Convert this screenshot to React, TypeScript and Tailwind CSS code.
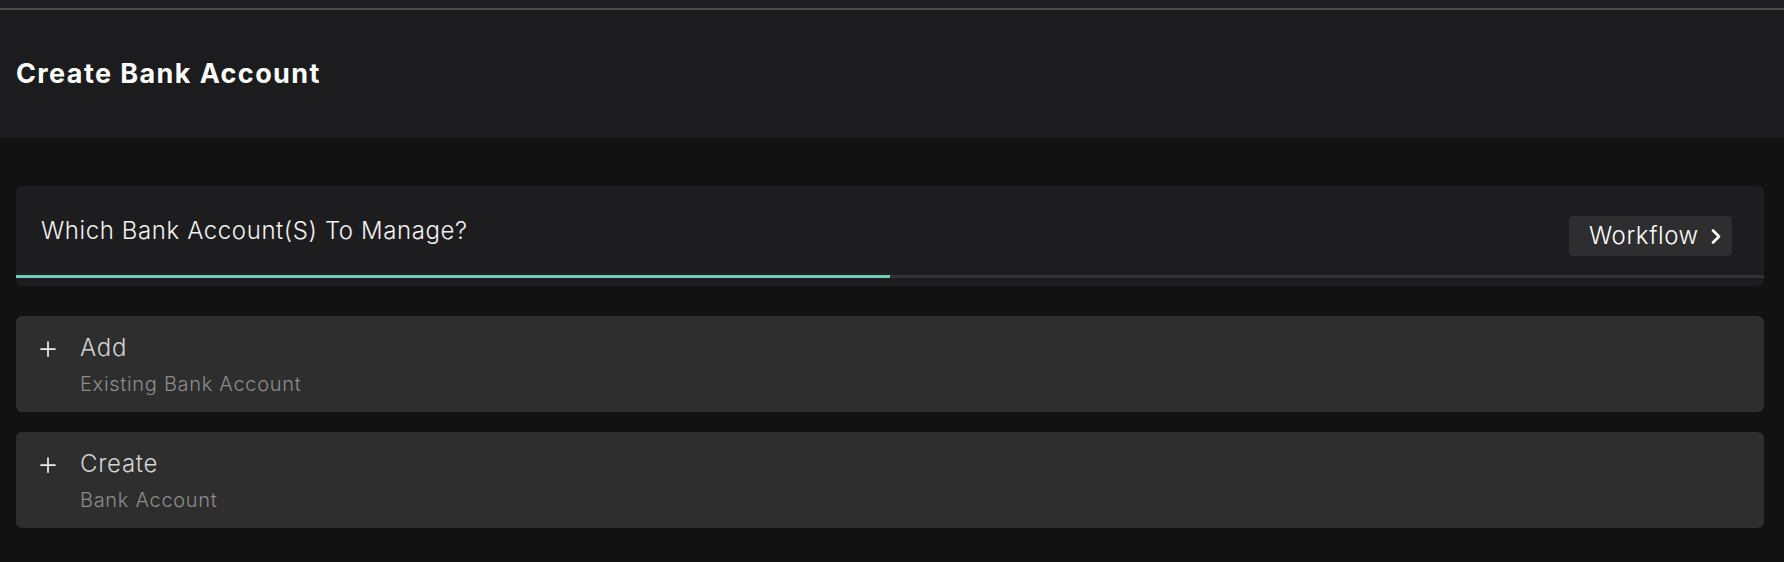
const options = [
  { id: 'add', title: 'Add', subtitle: 'Existing Bank Account' },
  { id: 'create', title: 'Create', subtitle: 'Bank Account' },
];

function PlusIcon() {
  return (
    <svg width="16" height="16" viewBox="0 0 16 16" className="shrink-0 text-[#ececec]">
      <path d="M8 1v14M1 8h14" stroke="currentColor" strokeWidth="1.75" strokeLinecap="round" />
    </svg>
  );
}

function Chevron() {
  return (
    <svg width="10" height="15" viewBox="0 0 10 15" className="shrink-0">
      <path d="M2 1.5l6 6-6 6" fill="none" stroke="white" strokeWidth="2.6" strokeLinecap="round" strokeLinejoin="round" />
    </svg>
  );
}

export default function App() {
  const progress = 50;

  return (
    <div className="min-h-screen bg-[#121212] font-['Inter',sans-serif] text-white">
      {/* Top strip */}
      <div className="h-2 bg-[#1f1e22]" />
      <div className="h-[2px] bg-[#4a4a4c]" />

      {/* Header */}
      <div className="flex h-[128px] items-center bg-[#1c1c1e] px-4">
        <h1 className="text-[27px] font-bold tracking-[1.4px]">Create Bank Account</h1>
      </div>

      <div className="flex flex-col pl-4 pr-5 pt-12">
        {/* Question card */}
        <div className="flex flex-col rounded-md bg-[#1d1d1f] pb-2">
          <div className="flex items-start justify-between pl-[25px] pr-8 pt-[28px]">
            <div className="text-[24px] font-light leading-[33px] tracking-[0.6px] text-[#f2f2f2]">
              Which Bank Account(S) To Manage?
            </div>
            <button className="mt-[2px] flex h-10 w-[163px] items-center gap-3 rounded bg-[#2e2e30] pl-[20px] text-[24px] font-light tracking-[0.6px] text-white">
              <span>Workflow</span>
              <Chevron />
            </button>
          </div>
          <div className="mt-[19px] h-[3px] w-full bg-[#333335]">
            <div className="h-full bg-[#72cdbd]" style={{ width: `${progress}%` }} />
          </div>
        </div>

        <div className="mt-[30px] flex flex-col gap-5">
          {options.map((opt) => (
            <div key={opt.id} className="h-24 rounded-md bg-[#2e2e2e] px-6 pt-4">
              <div className="flex items-center gap-6">
                <div className="mt-[2px]">
                  <PlusIcon />
                </div>
                <div className="text-[24px] font-light leading-8 tracking-[0.7px] text-[#d4d4d4]">
                  {opt.title}
                </div>
              </div>
              <div className="ml-10 mt-[6px] text-[20px] font-light leading-7 tracking-[0.7px] text-[#8c8c8c]">
                {opt.subtitle}
              </div>
            </div>
          ))}
        </div>
      </div>
    </div>
  );
}
